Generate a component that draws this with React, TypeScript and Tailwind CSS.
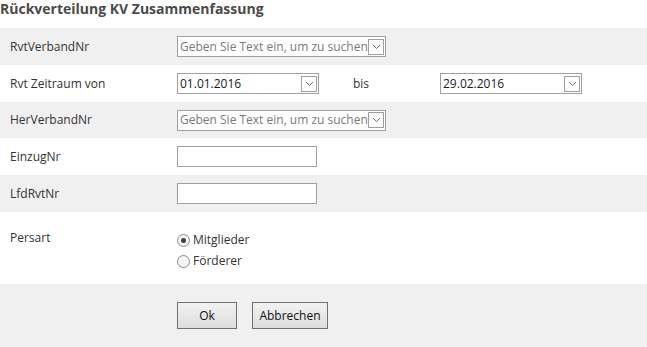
import { ReactNode } from "react";

const font = { fontFamily: "'Open Sans', 'Noto Sans', sans-serif" };

const Arrow = () => (
  <span className="flex h-[16px] w-[16px] shrink-0 items-center justify-center border border-[#a0a0a0] bg-white">
    <svg width="9" height="6" viewBox="0 0 9 6">
      <path d="M1 1 L4.5 4.5 L8 1" fill="none" stroke="#707070" strokeWidth="1" />
    </svg>
  </span>
);

const Combo = ({ text, placeholder, width }: { text: string; placeholder?: boolean; width: string }) => (
  <div className={`flex h-[21px] ${width} shrink-0 items-center justify-between overflow-hidden border border-[#a0a0a0] bg-white pl-[2px] pr-[1px]`}>
    <span className={`whitespace-nowrap text-[12px] ${placeholder ? "text-[#7a7a7a]" : "text-[#1a1a2a]"}`}>{text}</span>
    <Arrow />
  </div>
);

const Row = ({ label, gray, h, children }: { label: string; gray?: boolean; h: string; children?: ReactNode }) => (
  <div className={`flex ${h} items-center ${gray ? "bg-[#f0f0f0]" : "bg-white"}`}>
    <div className="w-[177px] shrink-0 whitespace-nowrap pl-[10px] text-[12px] text-[#333]">{label}</div>
    {children}
  </div>
);

const TextBox = () => <div className="h-[21px] w-[140px] shrink-0 border border-[#a0a0a0] bg-white" />;

const Radio = ({ checked, label }: { checked?: boolean; label: string }) => (
  <label className="flex h-[14px] items-center gap-[3px] whitespace-nowrap text-[12px] text-[#333]">
    <span className="flex h-[13px] w-[13px] items-center justify-center rounded-full border border-[#8a8a8a] bg-[#f4f4f4]">
      {checked && <span className="h-[5px] w-[5px] rounded-full bg-[#404040]" />}
    </span>
    {label}
  </label>
);

const Btn = ({ children, w }: { children: ReactNode; w: string }) => (
  <button className={`h-[27px] ${w} border border-[#707070] bg-gradient-to-b from-[#f2f2f2] to-[#dddddd] text-[12px] text-[#111]`}>
    {children}
  </button>
);

export default function App() {
  return (
    <div className="h-[347px] w-[647px] overflow-hidden bg-white" style={font}>
      <div className="h-[28px] text-[14px] font-bold leading-[18px] text-[#4a4a4a]">Rückverteilung KV Zusammenfassung</div>
      <Row label="RvtVerbandNr" gray h="h-[37px]">
        <Combo text="Geben Sie Text ein, um zu suchen" placeholder width="w-[209px]" />
      </Row>
      <Row label="Rvt Zeitraum von" h="h-[37px]">
        <Combo text="01.01.2016" width="w-[142px]" />
        <span className="ml-[34px] w-[87px] shrink-0 text-[12px] text-[#333]">bis</span>
        <Combo text="29.02.2016" width="w-[142px]" />
      </Row>
      <Row label="HerVerbandNr" gray h="h-[36px]">
        <Combo text="Geben Sie Text ein, um zu suchen" placeholder width="w-[209px]" />
      </Row>
      <Row label="EinzugNr" h="h-[37px]">
        <TextBox />
      </Row>
      <Row label="LfdRvtNr" gray h="h-[37px]">
        <TextBox />
      </Row>
      <div className="flex h-[72px] bg-white">
        <div className="w-[177px] shrink-0 pl-[10px] pt-[17px] text-[12px] text-[#333]">Persart</div>
        <div className="flex flex-col gap-[7px] pt-[21px]">
          <Radio checked label="Mitglieder" />
          <Radio label="Förderer" />
        </div>
      </div>
      <div className="flex h-[63px] gap-[15px] bg-[#f0f0f0] pl-[177px] pt-[18px]">
        <Btn w="w-[60px]">Ok</Btn>
        <Btn w="w-[76px]">Abbrechen</Btn>
      </div>
    </div>
  );
}
